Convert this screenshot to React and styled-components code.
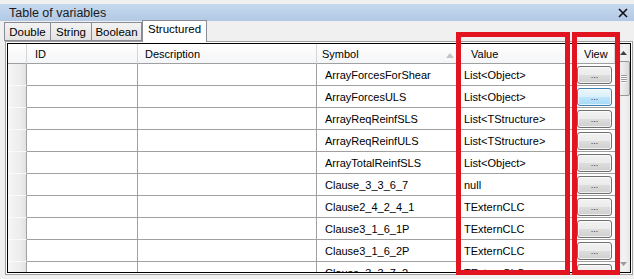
import React from 'react';
import styled, { createGlobalStyle } from 'styled-components';

const GlobalStyle = createGlobalStyle`
  html, body {
    margin: 0;
    padding: 0;
    background: #f0f0f0;
  }
  body {
    font-family: "Liberation Sans", Arial, sans-serif;
    color: #000;
  }
`;

const Window = styled.div`
  position: relative;
  width: 634px;
  height: 279px;
  overflow: hidden;
  background: #f0f0f0;
  display: flex;
  flex-direction: column;
`;

const TitleBar = styled.div`
  margin-top: 4px;
  height: 17px;
  background: linear-gradient(#c5d8ee, #b2c9e5);
  display: flex;
  align-items: center;
  justify-content: space-between;
  padding: 0 6px 0 9px;
  font-size: 12.5px;
  color: #1a1a1a;
`;

const TabStrip = styled.div`
  height: 20px;
  display: flex;
  align-items: flex-end;
  padding-left: 4px;
  position: relative;
  z-index: 1;
`;

const Tab = styled.div`
  box-sizing: border-box;
  height: ${p => (p.$active ? '22px' : '19px')};
  margin-bottom: ${p => (p.$active ? '-1px' : '0')};
  width: ${p => p.$w}px;
  border: 1px solid #898c95;
  border-bottom: ${p => (p.$active ? 'none' : '1px solid #898c95')};
  border-left: ${p => (p.$first || p.$active ? '1px solid #898c95' : 'none')};
  background: ${p => (p.$active ? '#fff' : 'linear-gradient(#f3f3f3, #e3e3e3)')};
  font-size: 11.5px;
  display: flex;
  align-items: ${p => (p.$active ? 'flex-start' : 'center')};
  padding-top: ${p => (p.$active ? '2px' : '0')};
  justify-content: center;
`;

const Frame = styled.div`
  box-sizing: border-box;
  margin: 0 1px 0 5px;
  height: 234px;
  border: 1px solid #a0a0a0;
  padding: 1px;
  background: #fff;
`;

const Inner = styled.div`
  box-sizing: border-box;
  height: 100%;
  border: 1px solid #000;
  display: flex;
  overflow: hidden;
`;

const Grid = styled.div`
  display: grid;
  grid-template-columns: 19px 111px 179px 144px 113px 41px;
  grid-template-rows: 20px;
  grid-auto-rows: 22px;
  align-content: start;
`;

const HeadCell = styled.div`
  box-sizing: border-box;
  position: relative;
  border-right: 1px solid #d5d5d5;
  border-bottom: 1px solid #a0a0a0;
  background: linear-gradient(#ffffff, #f4f5f7);
  font-size: 11px;
  display: flex;
  align-items: center;
  padding-left: ${p => p.$pad || 0}px;
`;

const RowHead = styled.div`
  box-sizing: border-box;
  border-right: 1px solid #a0a0a0;
  border-bottom: 1px solid #fafafa;
  background: linear-gradient(90deg, #f6f6f6, #ececec 70%, #e2e2e2);
`;

const Cell = styled.div`
  box-sizing: border-box;
  border-right: 1px solid #a0a0a0;
  border-bottom: 1px solid #a0a0a0;
  font-size: 11px;
  display: flex;
  align-items: center;
  padding-left: ${p => p.$pad || 0}px;
  white-space: nowrap;
  overflow: hidden;
`;

const ButtonCell = styled.div`
  box-sizing: border-box;
  border-bottom: 1px solid #a0a0a0;
  padding: 2px 0 0 3px;
`;

const DotsButton = styled.div`
  box-sizing: border-box;
  width: 35px;
  height: 18px;
  border-radius: 3px;
  border: 1px solid ${p => (p.$focus ? '#3c7fb1' : '#707070')};
  background: ${p =>
    p.$focus
      ? 'linear-gradient(#eaf6fd, #d9f0fc 50%, #bee6fd 50%, #a7d9f5)'
      : 'linear-gradient(#f2f2f2, #ebebeb 50%, #dddddd 50%, #cfcfcf)'};
  box-shadow: inset 0 0 0 1px rgba(255, 255, 255, 0.7);
  font-size: 9px;
  color: #333;
  display: flex;
  justify-content: center;
  align-items: flex-end;
  padding-bottom: 3px;
  line-height: 1;
`;

const SortMark = styled.svg`
  position: absolute;
  right: 6px;
  top: 9px;
`;

const ScrollBar = styled.div`
  width: 15px;
  flex: none;
  display: flex;
  flex-direction: column;
  background: linear-gradient(90deg, #e4e4e4, #f1f1f1 40%, #f1f1f1 60%, #e6e6e6);
  border-left: 1px solid #ececec;
`;

const ArrowBox = styled.div`
  height: 17px;
  display: flex;
  align-items: center;
  justify-content: center;
  margin-top: ${p => (p.$bottom ? 'auto' : '0')};
`;

const Thumb = styled.div`
  box-sizing: border-box;
  margin: 0 1px 0 2px;
  height: 35px;
  border: 1px solid #979797;
  border-radius: 2px;
  background: linear-gradient(90deg, #f3f3f3, #e8e8e8 50%, #d8d8d8);
  display: flex;
  flex-direction: column;
  align-items: center;
  justify-content: center;
  gap: 1px;
`;

const Grip = styled.div`
  width: 6px;
  height: 1px;
  background: #9a9a9a;
  box-shadow: 0 1px 0 #fff;
`;

const Highlight = styled.div`
  position: absolute;
  box-sizing: border-box;
  top: 32px;
  left: ${p => p.$left}px;
  width: ${p => p.$width}px;
  height: 243px;
  border: 5px solid #e2141f;
  pointer-events: none;
`;

const rows = [
  ['ArrayForcesForShear', 'List<Object>'],
  ['ArrayForcesULS', 'List<Object>'],
  ['ArrayReqReinfSLS', 'List<TStructure>'],
  ['ArrayReqReinfULS', 'List<TStructure>'],
  ['ArrayTotalReinfSLS', 'List<Object>'],
  ['Clause_3_3_6_7', 'null'],
  ['Clause2_4_2_4_1', 'TExternCLC'],
  ['Clause3_1_6_1P', 'TExternCLC'],
  ['Clause3_1_6_2P', 'TExternCLC'],
  ['Clause_3_3_7_2', 'TExternCLC'],
];

const tabs = [
  { label: 'Double', w: 47 },
  { label: 'String', w: 41 },
  { label: 'Boolean', w: 50 },
  { label: 'Structured', w: 65, active: true },
];

export default function App() {
  return (
    <Window>
      <GlobalStyle />
      <TitleBar>
        <span>Table of variables</span>
        <svg width="10" height="10" viewBox="0 0 10 10">
          <path d="M1 1 L9 9 M9 1 L1 9" stroke="#111" strokeWidth="1.6" />
        </svg>
      </TitleBar>
      <TabStrip>
        {tabs.map((t, i) => (
          <Tab key={t.label} $w={t.w} $active={t.active} $first={i === 0}>
            {t.label}
          </Tab>
        ))}
      </TabStrip>
      <Frame>
        <Inner>
          <Grid>
            <HeadCell />
            <HeadCell $pad={8}>ID</HeadCell>
            <HeadCell $pad={7}>Description</HeadCell>
            <HeadCell $pad={5}>
              Symbol
              <SortMark width="8" height="5" viewBox="0 0 8 5">
                <path d="M0 5 L4 0 L8 5 Z" fill="#c4c4c4" />
              </SortMark>
            </HeadCell>
            <HeadCell $pad={10}>Value</HeadCell>
            <HeadCell $pad={10}>View</HeadCell>
            {rows.map(([symbol, value], i) => (
              <React.Fragment key={symbol}>
                <RowHead />
                <Cell />
                <Cell />
                <Cell $pad={8}>{symbol}</Cell>
                <Cell $pad={3}>{value}</Cell>
                <ButtonCell>
                  <DotsButton $focus={i === 1}>...</DotsButton>
                </ButtonCell>
              </React.Fragment>
            ))}
          </Grid>
          <ScrollBar>
            <ArrowBox>
              <svg width="7" height="4" viewBox="0 0 7 4">
                <path d="M0 4 L3.5 0 L7 4 Z" fill="#404040" />
              </svg>
            </ArrowBox>
            <Thumb>
              <Grip />
              <Grip />
              <Grip />
              <Grip />
            </Thumb>
            <ArrowBox $bottom>
              <svg width="7" height="4" viewBox="0 0 7 4">
                <path d="M0 0 L3.5 4 L7 0 Z" fill="#9a9a9a" />
              </svg>
            </ArrowBox>
          </ScrollBar>
        </Inner>
      </Frame>
      <Highlight $left={456} $width={114} />
      <Highlight $left={572} $width={48} />
    </Window>
  );
}
